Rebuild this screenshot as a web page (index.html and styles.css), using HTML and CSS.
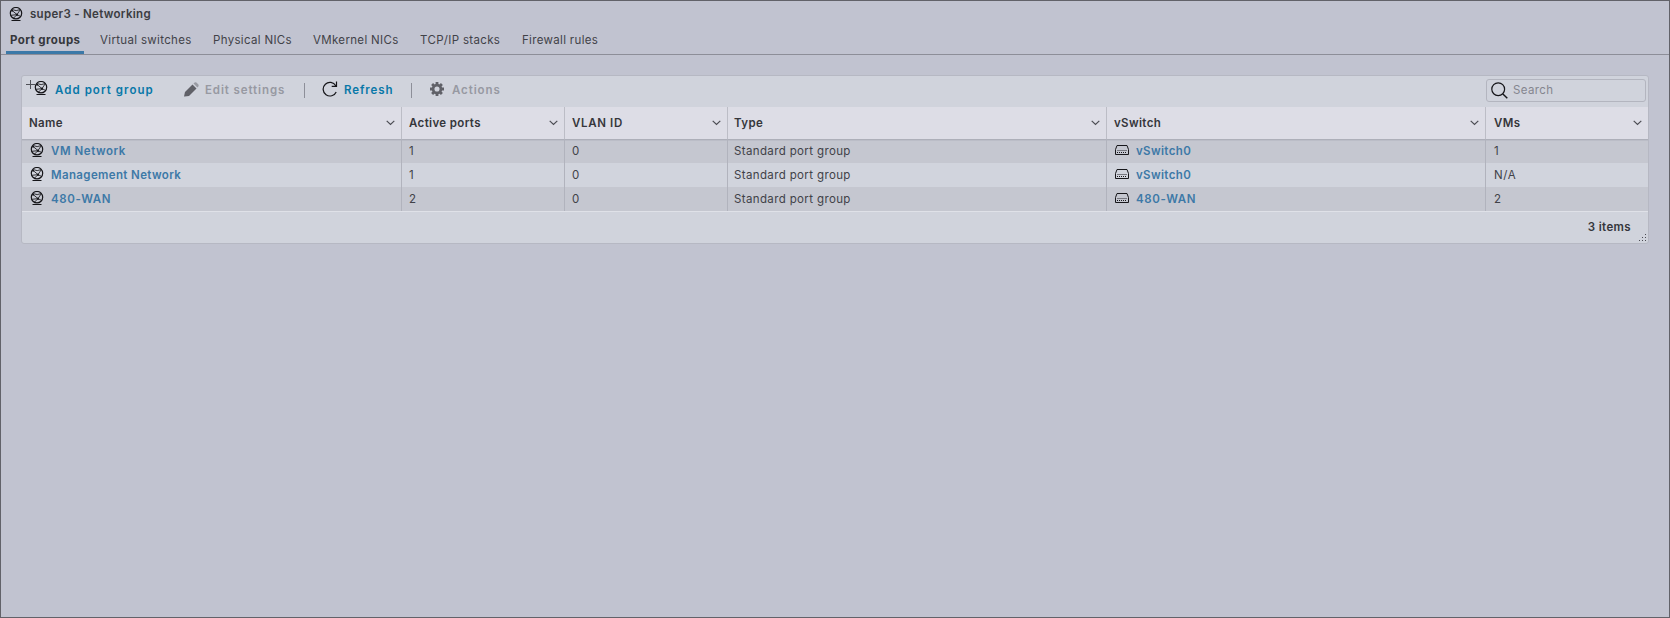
FILE: index.html
```html
<!DOCTYPE html>
<html lang="en">
<head>
<meta charset="utf-8">
<title>super3 - Networking</title>
<link rel="stylesheet" href="styles.css">
</head>
<body>
<svg class="defs" width="0" height="0" aria-hidden="true">
  <symbol id="net" viewBox="0 0 14 15">
    <g fill="none" stroke="#151519">
      <circle cx="7" cy="6.2" r="5.7" stroke-width="1.2"/>
      <path stroke-width=".85" d="M3 3.4 L8 7.6 L11.2 2.8 M3.2 2.6 L7.2 3.6 L11.2 2.6 M1.5 8.4 L8 7.6 L4.6 11 M8 7.6 L11.3 9.3"/>
      <path d="M2.5 13.5 H11.5"/>
    </g>
    <path d="M7 6.8 h2 v2 H7z M2.2 2.9h1.8v1.6h-1.8z" fill="#151519"/>
  </symbol>
  <symbol id="switch" viewBox="0 0 14 11">
    <path d="M.5 9.5 V4.5 L2 .5 H12 L13.5 4.5 V9.5 Z" fill="none" stroke="#17171b"/>
    <path d="M2 5.5 H12" stroke="#777880" stroke-width="1"/>
    <path d="M2 7.5 H12" stroke="#17171b" stroke-width="1" stroke-dasharray="1 1"/>
  </symbol>
  <symbol id="chev" viewBox="0 0 9 6"><path d="M.7 .9 L4.5 4.5 L8.3 .9" fill="none" stroke="#4b4c53" stroke-width="1.2"/></symbol>
</svg>
<main class="window">
  <header class="title"><svg class="net"><use href="#net"/></svg><span>super3 - Networking</span></header>
  <nav class="tabs">
    <a class="tab t1 active">Port groups</a><a class="tab t2">Virtual switches</a><a class="tab t3">Physical NICs</a><a class="tab t4">VMkernel NICs</a><a class="tab t5">TCP/IP stacks</a><a class="tab t6">Firewall rules</a>
  </nav>
  <section class="panel">
    <div class="toolbar">
      <div class="btn add"><svg class="addicon" viewBox="0 0 22 17"><path d="M0 5.5H9 M4.5 1V10" stroke="#505158" fill="none"/><use href="#net" x="8" y="2" width="14" height="15"/></svg><span>Add port group</span></div>
      <div class="btn edit off"><svg class="pencil" viewBox="0 0 15 15"><path d="M0 14.5 L1 10 L8.5 2.5 L12.5 6.5 L5 14 L.6 14.6 Z" fill="#606168"/><path d="M9.5 1.6 L10.6 .6 Q11.5 0 12.4 .6 L14.4 2.6 Q15 3.3 14.4 4.2 L13.4 5.4 Z" fill="#999ba3"/></svg><span>Edit settings</span></div>
      <i class="sep"></i>
      <div class="btn refresh"><svg class="reload" viewBox="0 0 16 16"><path d="M13.8 4.7 A6.8 6.8 0 1 0 14.2 10.9 M14.5 .5 V5.3 H9.7" fill="none" stroke="#151519" stroke-width="1.2"/></svg><span>Refresh</span></div>
      <i class="sep"></i>
      <div class="btn actions off"><svg class="gear" viewBox="0 0 14 14"><g stroke="#606168" fill="none"><circle cx="7" cy="7" r="3.9" stroke-width="2.7"/><path stroke-width="2.8" d="M7 0V3M7 11V14M0 7H3M11 7H14M2.1 2.1L4 4M10 10L11.9 11.9M2.1 11.9L4 10M10 4L11.9 2.1"/></g></svg><span>Actions</span></div>
      <div class="search"><svg class="lens" viewBox="0 0 17 17"><circle cx="7.2" cy="7.2" r="6.4" fill="none" stroke="#151519" stroke-width="1.2"/><path d="M11.9 11.9 L16.3 16.3" stroke="#151519" stroke-width="1.4"/></svg><span>Search</span></div>
    </div>
    <div class="grid head">
      <div><span>Name</span><svg class="chev"><use href="#chev"/></svg></div>
      <div><span>Active ports</span><svg class="chev"><use href="#chev"/></svg></div>
      <div><span class="wide">VLAN ID</span><svg class="chev"><use href="#chev"/></svg></div>
      <div><span>Type</span><svg class="chev"><use href="#chev"/></svg></div>
      <div><span>vSwitch</span><svg class="chev"><use href="#chev"/></svg></div>
      <div><span>VMs</span><svg class="chev"><use href="#chev"/></svg></div>
    </div>
    <div class="grid row dark first">
      <div><svg class="net"><use href="#net"/></svg><a class="vm">VM Network</a></div><div>1</div><div>0</div><div>Standard port group</div><div><svg class="switch"><use href="#switch"/></svg><a>vSwitch0</a></div><div>1</div>
    </div>
    <div class="grid row">
      <div><svg class="net"><use href="#net"/></svg><a>Management Network</a></div><div>1</div><div>0</div><div>Standard port group</div><div><svg class="switch"><use href="#switch"/></svg><a>vSwitch0</a></div><div class="wide">N/A</div>
    </div>
    <div class="grid row dark">
      <div><svg class="net"><use href="#net"/></svg><a class="wide">480-WAN</a></div><div>2</div><div>0</div><div>Standard port group</div><div><svg class="switch"><use href="#switch"/></svg><a class="wide">480-WAN</a></div><div>2</div>
    </div>
    <footer class="foot"><span>3 items</span><svg class="grip" viewBox="0 0 7 7"><path d="M6 0h1v1H6zM3 3h1v1H3zM6 3h1v1H6zM0 6h1v1H0zM3 6h1v1H3zM6 6h1v1H6z" fill="#4b4c53"/></svg></footer>
  </section>
</main>
</body>
</html>
```
FILE: styles.css
```css
* { box-sizing: border-box; }
body { margin: 0; font: 11.5px/24px Inter, "Open Sans", sans-serif; letter-spacing: .37px; color: #414248; }
svg { display: block; flex: none; }
.defs { position: absolute; }
.window { width: 1670px; height: 618px; border: 1px solid #626269; background: #c1c3d0; overflow: hidden; }
.title { display: flex; height: 29px; padding-left: 8px; font-weight: 600; color: #3b3c41; letter-spacing: .3px; }
.title span { line-height: 27px; }
.net { width: 14px; height: 15px; margin: 6px 7px 0 0; }
.tabs { display: flex; height: 25px; border-bottom: 1px solid #8d8e98; padding-left: 5px; }
.tab { height: 24px; line-height: 21px; padding-left: 4px; margin-right: 12px; white-space: nowrap; letter-spacing: .33px; }
.t1 { width: 78px; }
.t2 { width: 101px; }
.t3 { width: 88px; }
.t4 { width: 95px; }
.t5 { width: 90px; }
.t6 { width: 90px; }
.active { font-weight: 700; border-bottom: 3px solid #3c79a8; color: #35363b; letter-spacing: .42px; }
.panel { width: 1628px; height: 169px; margin: 20px 0 0 20px; border: 1px solid #b6b8c3; border-radius: 3px; background: #d0d3dc; }
.toolbar { display: flex; height: 31px; padding-left: 4px; }
.btn { display: flex; font-weight: 600; color: #0878a8; letter-spacing: 1.05px; line-height: 29px; white-space: nowrap; }
.off { color: #9799a2; letter-spacing: .9px; }
.add { width: 158px; }
.addicon { width: 22px; height: 17px; margin: 3px 7px 0 0; }
.edit { width: 120px; }
.pencil { width: 15px; height: 15px; margin: 6px 6px 0 0; }
.sep { width: 1px; height: 15px; margin-top: 7px; background: #8d8f99; }
.refresh { width: 106px; padding-left: 17px; letter-spacing: .9px; }
.reload { width: 16px; height: 16px; margin: 5px 6px 0 0; }
.actions { padding-left: 18px; }
.gear { width: 14px; height: 14px; margin: 6px 8px 0 0; }
.search { display: flex; width: 160px; height: 23px; margin: 3px 2px 0 auto; border: 1px solid #b3b5bf; border-radius: 3px; padding-left: 4px; line-height: 21px; color: #85868f; }
.lens { width: 17px; height: 17px; margin: 2px 5px 0 0; }
.grid { display: grid; grid-template-columns: 380px 163px 163px 379px 379px 1fr; }
.grid > div { display: flex; padding-left: 7px; border-right: 1px solid #b1b3bd; white-space: nowrap; }
.grid > div:nth-child(4) { padding-left: 6px; }
.grid > div:last-child { border-right: 0; padding-left: 8px; }
.head { height: 32px; background: #dddde6; line-height: 32px; font-weight: 600; color: #35363b; }
.head > div { border-color: #bcbdc6; padding-right: 6px; justify-content: space-between; }
.chev { width: 9px; height: 6px; margin-top: 13px; }
.row { height: 24px; line-height: 24px; background: #d1d4dd; }
.dark { background: #c5c7d0; }
.first { box-shadow: inset 0 1px #adafb9, inset 0 2px #bbbdc7; }
.row .net { margin: 4px 7px 0 1px; }
.row a { font-weight: 600; color: #3d79a7; }
.row a.vm { letter-spacing: .55px; }
.wide, .row a.wide { letter-spacing: .65px; }
.switch { width: 14px; height: 11px; margin: 6px 7px 0 1px; }
.foot { display: flex; height: 32px; border-top: 1px solid #dfe1e8; justify-content: flex-end; line-height: 31px; font-weight: 600; color: #35363b; }
.grip { width: 7px; height: 7px; margin: 22px 2px 0 8px; }
```
